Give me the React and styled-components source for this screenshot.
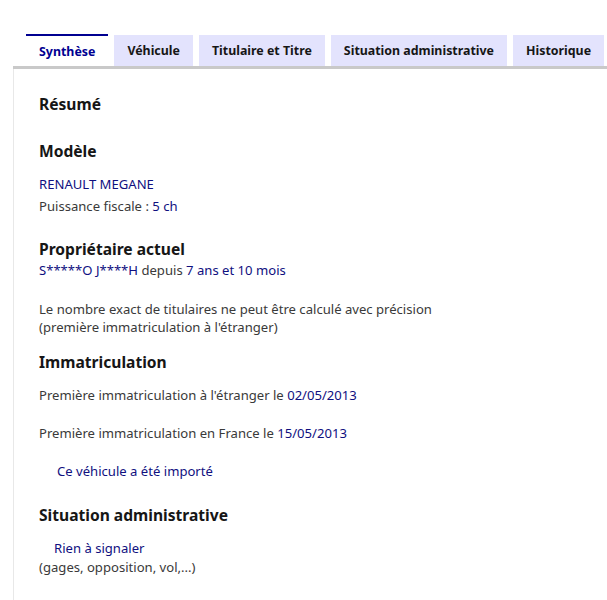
import React from 'react';
import styled, { createGlobalStyle } from 'styled-components';

const GlobalStyle = createGlobalStyle`
  body {
    margin: 0;
    background: #ffffff;
    font-family: 'Noto Sans', 'Liberation Sans', sans-serif;
    color: #3a3a3a;
  }
`;

const Wrapper = styled.div`
  padding-top: 34px;
  margin-left: 13px;
  height: 566px;
  display: flex;
  flex-direction: column;
`;

const TabList = styled.div`
  display: flex;
  align-items: flex-end;
  gap: 6px;
  padding-left: 13px;
  border-bottom: 3px solid #c9c9c9;
  white-space: nowrap;
  overflow: hidden;
`;

const Tab = styled.button`
  font-family: inherit;
  font-size: 12.4px;
  font-weight: 700;
  height: ${(p) => (p.$active ? '32px' : '31px')};
  padding: 0 13px;
  border: none;
  border-top: ${(p) => (p.$active ? '2px solid #000091' : 'none')};
  background: ${(p) => (p.$active ? '#ffffff' : '#e3e3fd')};
  color: ${(p) => (p.$active ? '#000091' : '#161616')};
  flex-shrink: 0;
`;

const Panel = styled.div`
  flex: 1;
  border-left: 1px solid #e8e8e8;
  padding: 23px 0 0 25px;
`;

const Title = styled.h2`
  margin: 0 0 23px;
  font-size: 15.6px;
  font-weight: 700;
  color: #161616;
  line-height: 24px;
`;

const Heading = styled.h3`
  margin: ${(p) => p.$top || '0'} 0 ${(p) => p.$bottom || '10px'};
  font-size: 15.6px;
  font-weight: 700;
  color: #161616;
  line-height: 24px;
`;

const Line = styled.p`
  margin: ${(p) => p.$top || '0'} 0 0;
  padding-left: ${(p) => p.$indent || '0'};
  font-size: 13.1px;
  line-height: 18px;
  color: ${(p) => (p.$blue ? '#10107f' : '#3a3a3a')};
`;

const Value = styled.span`
  color: #10107f;
`;

const tabs = ['Synthèse', 'Véhicule', 'Titulaire et Titre', 'Situation administrative', 'Historique'];

const App = () => (
  <>
    <GlobalStyle />
    <Wrapper>
      <TabList>
        {tabs.map((t, i) => (
          <Tab key={t} $active={i === 0}>{t}</Tab>
        ))}
      </TabList>
      <Panel>
        <Title>Résumé</Title>

        <Heading $bottom="12px">Modèle</Heading>
        <Line $blue>RENAULT MEGANE</Line>
        <Line $top="4px">
          Puissance fiscale : <Value>5 ch</Value>
        </Line>

        <Heading $top="22px" $bottom="0">Propriétaire actuel</Heading>
        <Line>
          <Value>S*****O J****H</Value> depuis <Value>7 ans et 10 mois</Value>
        </Line>
        <Line $top="21px">
          Le nombre exact de titulaires ne peut être calculé avec précision
          <br />
          (première immatriculation à l'étranger)
        </Line>

        <Heading $top="14px" $bottom="12px">Immatriculation</Heading>
        <Line>
          Première immatriculation à l'étranger le <Value>02/05/2013</Value>
        </Line>
        <Line $top="20px">
          Première immatriculation en France le <Value>15/05/2013</Value>
        </Line>
        <Line $top="20px" $blue $indent="18px">Ce véhicule a été importé</Line>

        <Heading $top="23px" $bottom="12px">Situation administrative</Heading>
        <Line $blue $indent="15px">Rien à signaler</Line>
        <Line $top="1px">(gages, opposition, vol,...)</Line>
      </Panel>
    </Wrapper>
  </>
);

export default App;
